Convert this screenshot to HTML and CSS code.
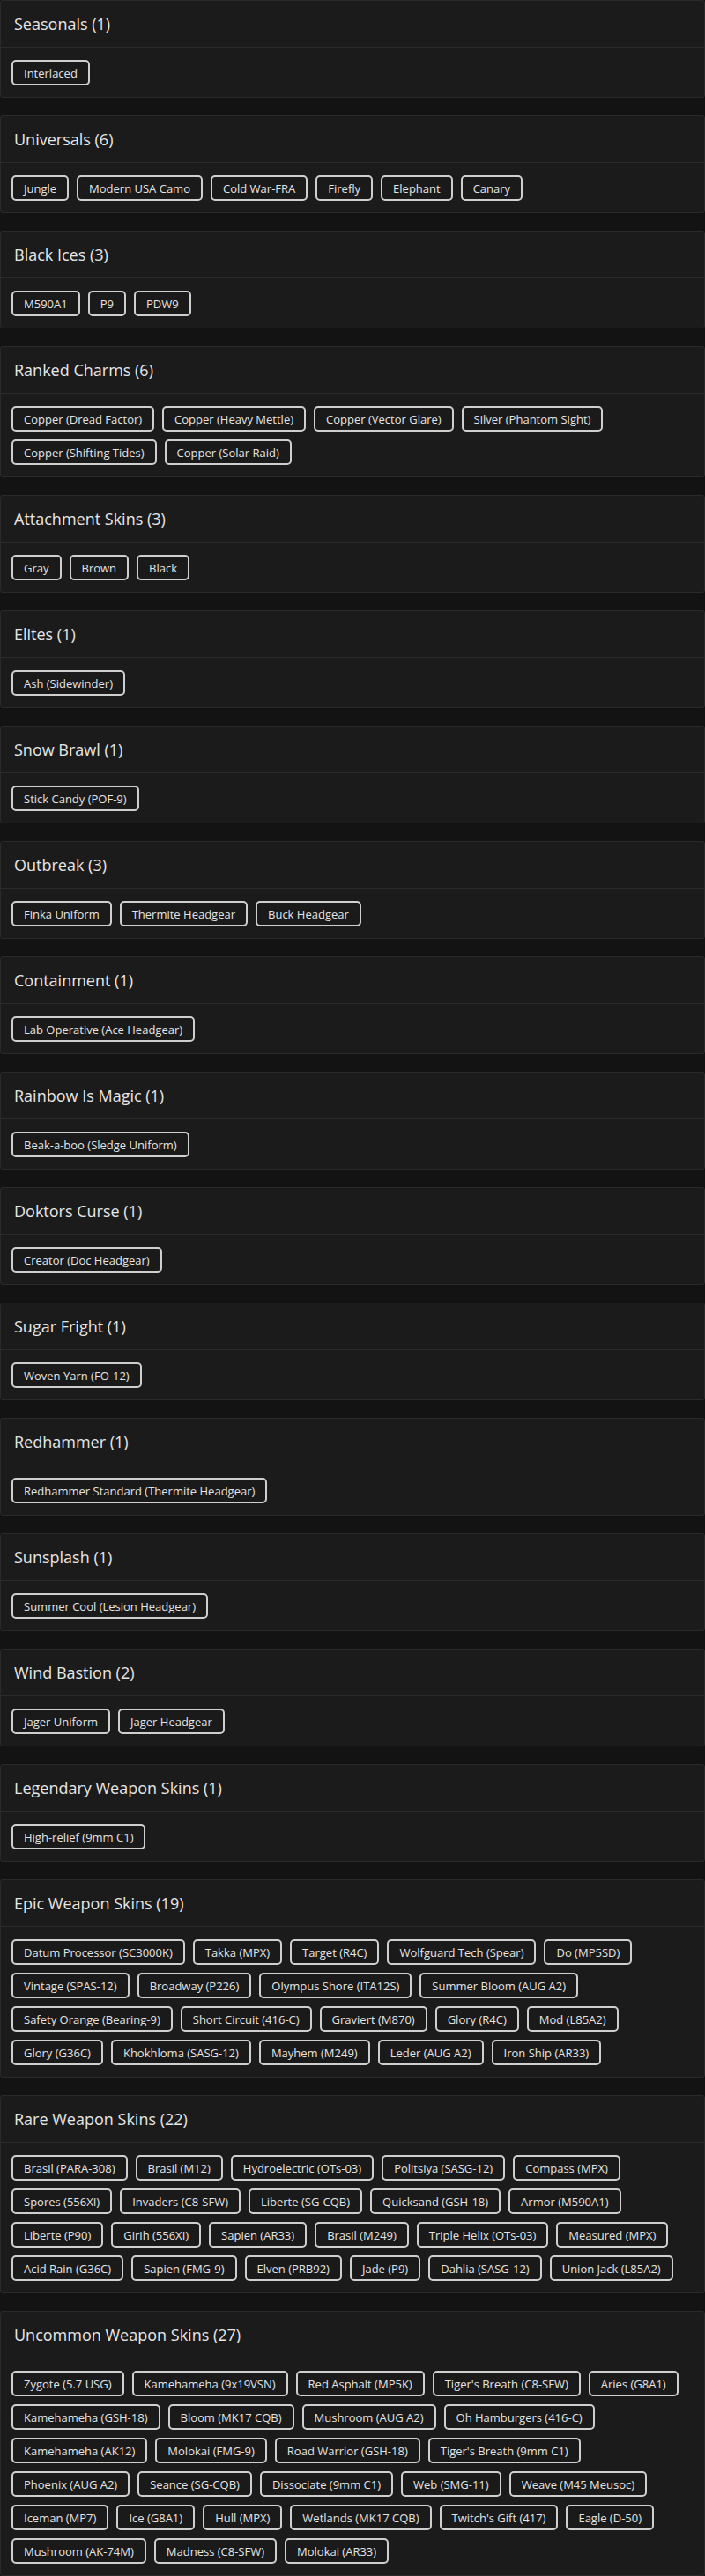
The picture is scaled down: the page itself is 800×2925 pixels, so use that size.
FILE: index.html
```html
<!DOCTYPE html>
<html lang="en">
<head>
<meta charset="utf-8">
<title>Collection</title>
<link rel="stylesheet" href="styles.css">
</head>
<body>
<main class="list">
  <section class="card">
    <header class="card-header"><h2 class="card-title">Seasonals (1)</h2></header>
    <div class="card-body"><span class="chip">Interlaced</span></div>
  </section>
  <section class="card">
    <header class="card-header"><h2 class="card-title">Universals (6)</h2></header>
    <div class="card-body"><span class="chip">Jungle</span><span class="chip">Modern USA Camo</span><span class="chip">Cold War-FRA</span><span class="chip">Firefly</span><span class="chip">Elephant</span><span class="chip">Canary</span></div>
  </section>
  <section class="card">
    <header class="card-header"><h2 class="card-title">Black Ices (3)</h2></header>
    <div class="card-body"><span class="chip">M590A1</span><span class="chip">P9</span><span class="chip">PDW9</span></div>
  </section>
  <section class="card">
    <header class="card-header"><h2 class="card-title">Ranked Charms (6)</h2></header>
    <div class="card-body"><span class="chip">Copper (Dread Factor)</span><span class="chip">Copper (Heavy Mettle)</span><span class="chip">Copper (Vector Glare)</span><span class="chip">Silver (Phantom Sight)</span><span class="chip">Copper (Shifting Tides)</span><span class="chip">Copper (Solar Raid)</span></div>
  </section>
  <section class="card">
    <header class="card-header"><h2 class="card-title">Attachment Skins (3)</h2></header>
    <div class="card-body"><span class="chip">Gray</span><span class="chip">Brown</span><span class="chip">Black</span></div>
  </section>
  <section class="card">
    <header class="card-header"><h2 class="card-title">Elites (1)</h2></header>
    <div class="card-body"><span class="chip">Ash (Sidewinder)</span></div>
  </section>
  <section class="card">
    <header class="card-header"><h2 class="card-title">Snow Brawl (1)</h2></header>
    <div class="card-body"><span class="chip">Stick Candy (POF-9)</span></div>
  </section>
  <section class="card">
    <header class="card-header"><h2 class="card-title">Outbreak (3)</h2></header>
    <div class="card-body"><span class="chip">Finka Uniform</span><span class="chip">Thermite Headgear</span><span class="chip">Buck Headgear</span></div>
  </section>
  <section class="card">
    <header class="card-header"><h2 class="card-title">Containment (1)</h2></header>
    <div class="card-body"><span class="chip">Lab Operative (Ace Headgear)</span></div>
  </section>
  <section class="card">
    <header class="card-header"><h2 class="card-title">Rainbow Is Magic (1)</h2></header>
    <div class="card-body"><span class="chip">Beak-a-boo (Sledge Uniform)</span></div>
  </section>
  <section class="card">
    <header class="card-header"><h2 class="card-title">Doktors Curse (1)</h2></header>
    <div class="card-body"><span class="chip">Creator (Doc Headgear)</span></div>
  </section>
  <section class="card">
    <header class="card-header"><h2 class="card-title">Sugar Fright (1)</h2></header>
    <div class="card-body"><span class="chip">Woven Yarn (FO-12)</span></div>
  </section>
  <section class="card">
    <header class="card-header"><h2 class="card-title">Redhammer (1)</h2></header>
    <div class="card-body"><span class="chip">Redhammer Standard (Thermite Headgear)</span></div>
  </section>
  <section class="card">
    <header class="card-header"><h2 class="card-title">Sunsplash (1)</h2></header>
    <div class="card-body"><span class="chip">Summer Cool (Lesion Headgear)</span></div>
  </section>
  <section class="card">
    <header class="card-header"><h2 class="card-title">Wind Bastion (2)</h2></header>
    <div class="card-body"><span class="chip">Jager Uniform</span><span class="chip">Jager Headgear</span></div>
  </section>
  <section class="card">
    <header class="card-header"><h2 class="card-title">Legendary Weapon Skins (1)</h2></header>
    <div class="card-body"><span class="chip">High-relief (9mm C1)</span></div>
  </section>
  <section class="card">
    <header class="card-header"><h2 class="card-title">Epic Weapon Skins (19)</h2></header>
    <div class="card-body"><span class="chip">Datum Processor (SC3000K)</span><span class="chip">Takka (MPX)</span><span class="chip">Target (R4C)</span><span class="chip">Wolfguard Tech (Spear)</span><span class="chip">Do (MP5SD)</span><span class="chip">Vintage (SPAS-12)</span><span class="chip">Broadway (P226)</span><span class="chip">Olympus Shore (ITA12S)</span><span class="chip">Summer Bloom (AUG A2)</span><span class="chip">Safety Orange (Bearing-9)</span><span class="chip">Short Circuit (416-C)</span><span class="chip">Graviert (M870)</span><span class="chip">Glory (R4C)</span><span class="chip">Mod (L85A2)</span><span class="chip">Glory (G36C)</span><span class="chip">Khokhloma (SASG-12)</span><span class="chip">Mayhem (M249)</span><span class="chip">Leder (AUG A2)</span><span class="chip">Iron Ship (AR33)</span></div>
  </section>
  <section class="card">
    <header class="card-header"><h2 class="card-title">Rare Weapon Skins (22)</h2></header>
    <div class="card-body"><span class="chip">Brasil (PARA-308)</span><span class="chip">Brasil (M12)</span><span class="chip">Hydroelectric (OTs-03)</span><span class="chip">Politsiya (SASG-12)</span><span class="chip">Compass (MPX)</span><span class="chip">Spores (556XI)</span><span class="chip">Invaders (C8-SFW)</span><span class="chip">Liberte (SG-CQB)</span><span class="chip">Quicksand (GSH-18)</span><span class="chip">Armor (M590A1)</span><span class="chip">Liberte (P90)</span><span class="chip">Girih (556XI)</span><span class="chip">Sapien (AR33)</span><span class="chip">Brasil (M249)</span><span class="chip">Triple Helix (OTs-03)</span><span class="chip">Measured (MPX)</span><span class="chip">Acid Rain (G36C)</span><span class="chip">Sapien (FMG-9)</span><span class="chip">Elven (PRB92)</span><span class="chip">Jade (P9)</span><span class="chip">Dahlia (SASG-12)</span><span class="chip">Union Jack (L85A2)</span></div>
  </section>
  <section class="card">
    <header class="card-header"><h2 class="card-title">Uncommon Weapon Skins (27)</h2></header>
    <div class="card-body"><span class="chip">Zygote (5.7 USG)</span><span class="chip">Kamehameha (9x19VSN)</span><span class="chip">Red Asphalt (MP5K)</span><span class="chip">Tiger's Breath (C8-SFW)</span><span class="chip">Aries (G8A1)</span><span class="chip">Kamehameha (GSH-18)</span><span class="chip">Bloom (MK17 CQB)</span><span class="chip">Mushroom (AUG A2)</span><span class="chip">Oh Hamburgers (416-C)</span><span class="chip">Kamehameha (AK12)</span><span class="chip">Molokai (FMG-9)</span><span class="chip">Road Warrior (GSH-18)</span><span class="chip">Tiger's Breath (9mm C1)</span><span class="chip">Phoenix (AUG A2)</span><span class="chip">Seance (SG-CQB)</span><span class="chip">Dissociate (9mm C1)</span><span class="chip">Web (SMG-11)</span><span class="chip">Weave (M45 Meusoc)</span><span class="chip">Iceman (MP7)</span><span class="chip">Ice (G8A1)</span><span class="chip">Hull (MPX)</span><span class="chip">Wetlands (MK17 CQB)</span><span class="chip">Twitch's Gift (417)</span><span class="chip">Eagle (D-50)</span><span class="chip">Mushroom (AK-74M)</span><span class="chip">Madness (C8-SFW)</span><span class="chip">Molokai (AR33)</span></div>
  </section>
</main>
</body>
</html>
```
FILE: styles.css
```css
* { box-sizing: border-box; }

html, body {
  margin: 0;
  padding: 0;
  background: #131313;
}

body {
  font-family: "Open Sans", "Noto Sans", sans-serif;
  color: #e2e2e2;
}

.list {
  display: flex;
  flex-direction: column;
  gap: 20px;
}

.card {
  background: #1b1b1b;
  border: 1px solid #2a2a2a;
  border-radius: 3px;
}

.card-header {
  height: 53px;
  padding: 0 15px;
  display: flex;
  align-items: center;
  border-bottom: 1px solid #2b2b2b;
}

.card-title {
  margin: 0;
  font-size: 18px;
  font-weight: 500;
  color: #e6e6e6;
  letter-spacing: 0;
}

.card-body {
  padding: 14px 12px 13px;
  display: flex;
  flex-wrap: wrap;
  gap: 9px 9px;
}

.chip {
  display: inline-flex;
  align-items: center;
  height: 29px;
  padding: 0 12px;
  border: 2px solid #cfcfcf;
  border-radius: 5px;
  background: #1a1a1a;
  font-size: 13px;
  color: #e4e4e4;
  white-space: nowrap;
}
```
